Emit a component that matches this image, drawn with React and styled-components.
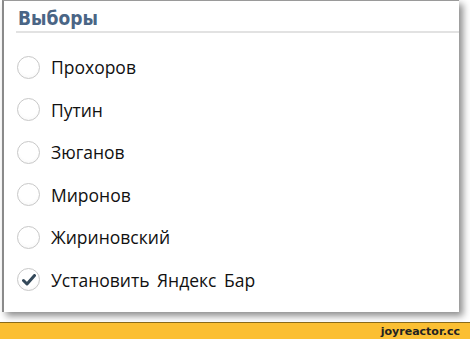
import React from 'react';
import styled, { createGlobalStyle } from 'styled-components';

const Global = createGlobalStyle`
    html, body {
        margin: 0;
        padding: 0;
        background: #ffffff;
        width: 470px;
        height: 339px;
        overflow: hidden;
    }
`

const Page = styled.div`
    width: 470px;
    height: 339px;
    display: flex;
    flex-direction: column;
    background: #ffffff;
`

const Stage = styled.div`
    flex: 1;
    padding: 0 11px 10px 2px;
`

const Card = styled.div`
    height: 100%;
    box-sizing: border-box;
    background: #ffffff;
    border-left: 2px solid #8a8a8a;
    border-top: 1px solid #9a9a9a;
    box-shadow: 4px 4px 7px rgba(0, 0, 0, 0.45);
    padding: 4px 0 0 12px;
`

const Title = styled.h2`
    margin: 0;
    font-family: 'DejaVu Sans Condensed', 'DejaVu Sans', sans-serif;
    font-stretch: condensed;
    font-weight: 700;
    font-size: 19px;
    line-height: 26px;
    color: #4a6585;
    padding-left: 2px;
    padding-bottom: 0;
    border-bottom: 2px solid #e2e2e2;
`

const List = styled.ul`
    list-style: none;
    margin: 0;
    padding: 22px 0 0 1px;
    display: flex;
    flex-direction: column;
    gap: 18.5px;
`

const Row = styled.li`
    display: flex;
    align-items: center;
    gap: 11px;
    height: 24px;
`

const Radio = styled.span`
    width: 21px;
    height: 21px;
    border-radius: 50%;
    border: 1px solid #c8c8c8;
    background: radial-gradient(circle at 50% 40%, #ffffff 55%, #f2f2f2 100%);
    display: flex;
    align-items: center;
    justify-content: center;
    flex-shrink: 0;
`

const Label = styled.span`
    font-family: 'Open Sans', sans-serif;
    font-size: 17.5px;
    word-spacing: 3px;
    color: #111111;
`

const Footer = styled.div`
    height: 16px;
    background: #fbbf33;
    border-top: 1px solid #8a6a1a;
    display: flex;
    justify-content: flex-end;
    align-items: center;
    padding-right: 10px;
    font-family: 'DejaVu Sans', Verdana, sans-serif;
    font-weight: 700;
    font-size: 11px;
    color: #222222;
`

const Check = () => (
    <svg width="14" height="12" viewBox="0 0 14 12">
        <path d="M1.5 6.5 L5 10 L12.5 1.5" fill="none" stroke="#34495a" strokeWidth="3" strokeLinecap="round" strokeLinejoin="round" />
    </svg>
)

const options = [
    { name: 'Прохоров' },
    { name: 'Путин' },
    { name: 'Зюганов' },
    { name: 'Миронов' },
    { name: 'Жириновский' },
    { name: 'Установить Яндекс Бар', checked: true },
]

const App = () => {
    return (
        <Page>
            <Global />
            <Stage>
                <Card>
                    <Title>Выборы</Title>
                    <List>
                        {options.map(o => (
                            <Row key={o.name}>
                                <Radio>{o.checked && <Check />}</Radio>
                                <Label>{o.name}</Label>
                            </Row>
                        ))}
                    </List>
                </Card>
            </Stage>
            <Footer>joyreactor.cc</Footer>
        </Page>
    )
}

export default App
